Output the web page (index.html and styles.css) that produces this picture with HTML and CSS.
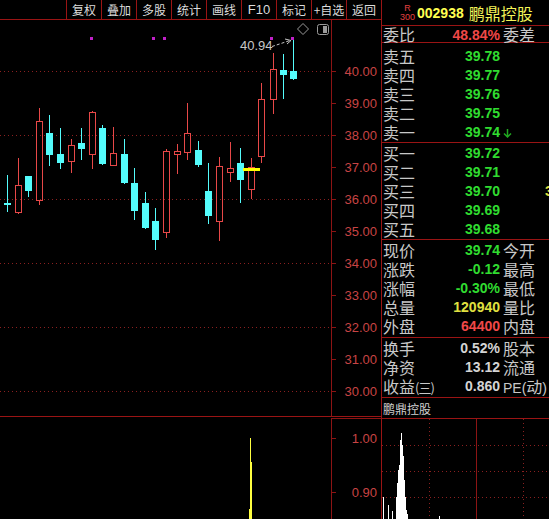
FILE: index.html
```html
<!DOCTYPE html>
<html>
<head>
    <meta charset="utf-8">
    <title>鹏鼎控股 002938</title>
    <link rel="stylesheet" href="styles.css">
</head>
<body>
<div class="screen">
    <div class="left">
        <div class="toolbar">
            <span class="btn">复权</span>
            <span class="btn">叠加</span>
            <span class="btn">多股</span>
            <span class="btn">统计</span>
            <span class="btn">画线</span>
            <span class="btn latin">F10</span>
            <span class="btn">标记</span>
            <span class="btn">+自选</span>
            <span class="btn">返回</span>
        </div>

        <!-- daily k-line, coords are page pixels -->
        <svg class="kline" viewBox="0 20 381 396" width="381" height="396">
            <g class="grid">
                <path d="M0 71.5H331M0 135.5H331M0 199.5H331M0 263.5H331M0 327.5H331M0 391.5H331"/>
            </g>
            <path class="axis" d="M331.5 20V416M331 71.5h5M331 103.5h5M331 135.5h5M331 167.5h5M331 199.5h5M331 231.5h5M331 263.5h5M331 295.5h5M331 327.5h5M331 359.5h5M331 391.5h5"/>
            <g class="ylab">
                <text x="377" y="76">40.00</text>
                <text x="377" y="108">39.00</text>
                <text x="377" y="140">38.00</text>
                <text x="377" y="172">37.00</text>
                <text x="377" y="204">36.00</text>
                <text x="377" y="236">35.00</text>
                <text x="377" y="268">34.00</text>
                <text x="377" y="300">33.00</text>
                <text x="377" y="332">32.00</text>
                <text x="377" y="364">31.00</text>
                <text x="377" y="396">30.00</text>
            </g>

            <!-- falling days -->
            <g class="down">
                <path d="M7.5 175V212M28.5 176V197M49.5 115V166M60.5 128V169M81.5 128V160M102.5 125V165M124.5 139V184M134.5 168V220M145.5 192V229M155.5 208V250M198.5 141V167M208.5 163V224M240.5 148V203M283.5 54V99M293.5 40V80"/>
                <rect x="4" y="203" width="7" height="2"/>
                <rect x="25" y="176" width="7" height="15"/>
                <rect x="46" y="133" width="7" height="22"/>
                <rect x="57" y="154" width="7" height="9"/>
                <rect x="78" y="143" width="7" height="6"/>
                <rect x="99" y="128" width="7" height="36"/>
                <rect x="121" y="154" width="7" height="29"/>
                <rect x="131" y="183" width="7" height="28"/>
                <rect x="142" y="203" width="7" height="25"/>
                <rect x="152" y="221" width="7" height="19"/>
                <rect x="195" y="150" width="7" height="15"/>
                <rect x="205" y="191" width="7" height="25"/>
                <rect x="237" y="163" width="7" height="17"/>
                <rect x="280" y="70" width="7" height="5"/>
                <rect x="290" y="71" width="7" height="8"/>
            </g>

            <!-- rising days -->
            <g class="up">
                <path d="M18.5 158V185M18.5 213V214M39.5 108V121M39.5 201V205M71.5 139V145M71.5 162V173M92.5 111V112M92.5 155V169M113.5 127V153M166.5 149V151M166.5 233V238M177.5 144V151M177.5 154V174M187.5 103V133M187.5 153V160M219.5 157V166M219.5 222V241M230.5 142V168M230.5 173V182M251.5 158V167M251.5 190V199M261.5 83V99M261.5 157V163M273.5 53V69M273.5 100V114"/>
                <rect x="15.5" y="185.5" width="6" height="27"/>
                <rect x="36.5" y="121.5" width="6" height="79"/>
                <rect x="68.5" y="145.5" width="6" height="16"/>
                <rect x="89.5" y="112.5" width="6" height="42"/>
                <rect x="110.5" y="153.5" width="6" height="12"/>
                <rect x="163.5" y="151.5" width="6" height="81"/>
                <rect x="174.5" y="151.5" width="6" height="3"/>
                <rect x="184.5" y="133.5" width="6" height="19"/>
                <rect x="216.5" y="166.5" width="6" height="55"/>
                <rect x="227.5" y="168.5" width="6" height="4"/>
                <rect x="248.5" y="167.5" width="6" height="22"/>
                <rect x="258.5" y="99.5" width="6" height="57"/>
                <rect x="270.5" y="69.5" width="6" height="30"/>
            </g>

            <rect class="cost" x="243" y="168" width="17" height="3"/>

            <g class="marks">
                <rect x="90" y="37" width="3" height="3"/>
                <rect x="152" y="37" width="3" height="3"/>
                <rect x="163" y="37" width="3" height="3"/>
                <rect x="270" y="37" width="3" height="3"/>
                <rect x="291" y="37" width="3" height="3"/>
            </g>

            <text class="hi" x="240" y="50">40.94</text>
            <path class="hi-arrow" d="M272 46.5L290 40.5"/>
            <path class="hi-head" d="M285 39L291 40.5L287 44"/>

            <path class="ico" d="M303 23.5L308.5 29L303 34.5L297.5 29Z"/>
            <rect class="ico" x="317.5" y="24.5" width="11" height="10" rx="2"/>
            <rect class="ico-fill" x="323" y="26" width="4" height="7"/>
        </svg>

        <svg class="sub" viewBox="0 417 381 102" width="381" height="102">
            <path class="axis" d="M331 418.5H381M331.5 418V519M331 438.5h5M331 492.5h5"/>
            <g class="ylab">
                <text x="377" y="443">1.00</text>
                <text x="377" y="497">0.90</text>
            </g>
            <path class="spike" d="M250.5 438V519M251.5 462V519M249.5 509V519"/>
        </svg>
    </div>

    <div class="quote">
        <div class="q-head">
            <span class="tag"><i>R</i><i>300</i></span>
            <span class="code">002938</span>
            <span class="name">鹏鼎控股</span>
        </div>

        <div class="sec ratio">
            <div class="row"><span class="k">委比</span><span class="v red">48.84%</span><span class="k k2">委差</span></div>
        </div>

        <div class="sec sell">
            <div class="row"><span class="k">卖五</span><span class="v green">39.78</span></div>
            <div class="row"><span class="k">卖四</span><span class="v green">39.77</span></div>
            <div class="row"><span class="k">卖三</span><span class="v green">39.76</span></div>
            <div class="row"><span class="k">卖二</span><span class="v green">39.75</span></div>
            <div class="row"><span class="k">卖一</span><span class="v green">39.74</span>
                <span class="k2"><svg class="arr" viewBox="0 0 9 9" width="9" height="9"><path d="M4.5 0V8M1 4.5L4.5 8L8 4.5"/></svg></span>
            </div>
        </div>

        <div class="sec buy">
            <div class="row"><span class="k">买一</span><span class="v green">39.72</span></div>
            <div class="row"><span class="k">买二</span><span class="v green">39.71</span></div>
            <div class="row"><span class="k">买三</span><span class="v green">39.70</span><span class="vol">3</span></div>
            <div class="row"><span class="k">买四</span><span class="v green">39.69</span></div>
            <div class="row"><span class="k">买五</span><span class="v green">39.68</span></div>
        </div>

        <div class="sec stat">
            <div class="row"><span class="k">现价</span><span class="v green">39.74</span><span class="k k2">今开</span></div>
            <div class="row"><span class="k">涨跌</span><span class="v green">-0.12</span><span class="k k2">最高</span></div>
            <div class="row"><span class="k">涨幅</span><span class="v green">-0.30%</span><span class="k k2">最低</span></div>
            <div class="row"><span class="k">总量</span><span class="v yellow">120940</span><span class="k k2">量比</span></div>
            <div class="row"><span class="k">外盘</span><span class="v red">64400</span><span class="k k2">内盘</span></div>
        </div>

        <div class="sec fin">
            <div class="row"><span class="k">换手</span><span class="v">0.52%</span><span class="k k2">股本</span></div>
            <div class="row"><span class="k">净资</span><span class="v">13.12</span><span class="k k2">流通</span></div>
            <div class="row"><span class="k">收益<em>(三)</em></span><span class="v">0.860</span><span class="k k2"><b>PE(</b>动<b>)</b></span></div>
        </div>

        <div class="sec label">鹏鼎控股</div>

        <svg class="chips" viewBox="382 419 167 100" width="167" height="100">
            <path class="grid" d="M382 445.5H549M382 471.5H549M382 497.5H549M429.5 419V519M523.5 419V519"/>
            <path class="axis" d="M476.5 419V519"/>
            <path class="spike-w" d="M383.5 497V519M388.5 505V519M392.5 511V519M396.5 497V519M397.5 483V519M398.5 470V519M399.5 465V519M400.5 440V519M401.5 433V519M402.5 445V519M403.5 456V519M404.5 480V519M405.5 497V519M406.5 510V519M407.5 514V519M439.5 516V519"/>
        </svg>
    </div>
</div>
</body>
</html>
```

FILE: styles.css
```css
body { margin: 0; background: #000; }
.screen { display: grid; grid-template-columns: 381px 168px; width: 549px; height: 519px; overflow: hidden; background: #000; }
.left { width: 381px; }

.toolbar { display: flex; justify-content: flex-end; height: 19px; border-bottom: 1px solid #9a1414; }
.btn { width: 34px; border-left: 1px solid #9a1414; color: #dcdcdc; font: 12px/19px "Noto Sans CJK SC", sans-serif; text-align: center; white-space: nowrap; }
.btn.latin { font: 13px/19px "Liberation Sans", sans-serif; }

.kline { display: block; width: 381px; height: 396px; border-bottom: 1px solid #9a1414; }
.sub { display: block; width: 381px; height: 102px; }

.grid { fill: none; stroke: #8a2020; stroke-width: 1; stroke-dasharray: 1 3; }
.axis { fill: none; stroke: #8c1414; stroke-width: 1; }
.ylab text { fill: #c84444; font: 13px "Liberation Sans", sans-serif; text-anchor: end; }

.down path { stroke: #54fcfc; stroke-width: 1; }
.down rect { fill: #54fcfc; }
.up path { stroke: #e84848; stroke-width: 1; }
.up rect { fill: none; stroke: #e84848; stroke-width: 1; }
.cost { fill: #ffff00; }
.marks rect { fill: #c020c8; }
.hi { fill: #c8c8c8; font: 13px "Liberation Sans", sans-serif; }
.hi-arrow { stroke: #c8c8c8; stroke-dasharray: 3 2; fill: none; }
.hi-head { stroke: #c8c8c8; fill: none; }
.ico { fill: none; stroke: #9a9a9a; stroke-width: 1; }
.ico-fill { fill: #9a9a9a; }
.spike { fill: none; stroke: #ffff40; stroke-width: 1; }
.spike-w { fill: none; stroke: #ffffff; stroke-width: 1; }

.quote { display: flex; flex-direction: column; border-left: 1px solid #9a1414; width: 167px; height: 519px; }
.q-head { display: flex; align-items: center; height: 25px; padding-left: 17px; border-bottom: 1px solid #9a1414; }
.tag { display: flex; flex-direction: column; align-items: center; width: 17px; margin-top: 1px; }
.tag i { font: 9px/9px "Liberation Sans", sans-serif; font-style: normal; color: #e04040; }
.code { margin-left: 1px; color: #ffff50; font: bold 14px "Liberation Sans", sans-serif; }
.name { margin-left: 5px; color: #f4f458; font: 16px "Noto Sans CJK SC", sans-serif; }

.sec { border-bottom: 1px solid #9a1414; }
.ratio { height: 16px; }
.ratio .row { height: 16px; line-height: 16px; }
.sell { height: 95px; padding-top: 4px; }
.buy { height: 95px; padding-top: 1px; }
.stat { height: 95px; padding: 1px 0 1px; }
.fin { height: 57px; padding: 1px 0 1px; }
.label { height: 20px; padding-left: 1px; color: #d0d0d0; font: 12px/22px "Noto Sans CJK SC", sans-serif; }

.row { display: grid; grid-template-columns: 50px 67px auto; height: 19px; line-height: 19px; padding-left: 1px; white-space: nowrap; }
.k { color: #c8c8c8; font-size: 16px; font-family: "Noto Sans CJK SC", sans-serif; }
.k em { font-style: normal; font-size: 13px; letter-spacing: -1px; }
.k b { font-weight: normal; font-family: "Liberation Sans", sans-serif; font-size: 14px; }
.k2 { padding-left: 3px; }
.v { text-align: right; color: #d4d4d4; font: bold 14px/19px "Liberation Sans", sans-serif; }
.green { color: #30dc30; }
.red { color: #f04848; }
.yellow { color: #e0e040; }
.vol { padding-left: 45px; color: #e0e040; font: bold 14px/19px "Liberation Sans", sans-serif; }
.arr { display: block; margin-top: 6px; }
.arr path { fill: none; stroke: #20a820; stroke-width: 1.5; }

.chips { display: block; width: 167px; height: 100px; }
```
